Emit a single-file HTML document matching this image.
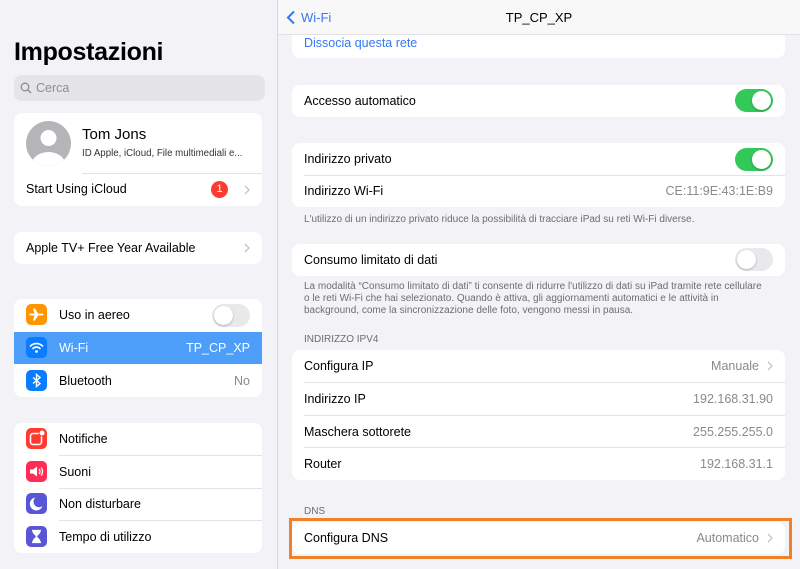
<!DOCTYPE html>
<html><head><meta charset="utf-8"><style>
*{margin:0;padding:0;box-sizing:border-box}
body{width:800px;height:569px;overflow:hidden;background:#f2f2f7;font-family:"Liberation Sans",sans-serif;color:#000;position:relative;font-size:12.5px}
.a{position:absolute}
.card{position:absolute;background:#fff;border-radius:8px;overflow:hidden}
.row{position:absolute;left:0;right:0;height:32px;line-height:32px;padding-left:12px}
.val{position:absolute;right:12px;top:0;color:#8a8a8e}
.chev{display:inline-block;width:6px;height:10px;margin-left:8px;vertical-align:-1px}
.sep{position:absolute;height:1px;background:#e3e3e6;right:0}
.foot{position:absolute;left:304px;font-size:10px;color:#6d6d72;line-height:12px;white-space:nowrap}
.tog{position:absolute;width:38px;height:23px;border-radius:12px}
.tog::after{content:"";position:absolute;top:2px;width:19px;height:19px;border-radius:50%;background:#fff;box-shadow:0 1px 2px rgba(0,0,0,.25)}
.on{background:#34c759}.on::after{right:2px}
.off{background:#e9e9eb}.off::after{left:2px}
.ic{position:absolute;left:12px;top:5px;width:21px;height:21px;border-radius:5px}
.ic svg{position:absolute;left:0;top:0}
.lbl{position:absolute;left:45px;top:0}
</style></head><body>
<svg width="0" height="0" style="position:absolute"><defs><symbol id="ch" viewBox="0 0 6 10"><path d="M1 1l4 4-4 4" fill="none" stroke="#c4c4c7" stroke-width="1.3"/></symbol></defs></svg>
<!-- sidebar -->
<div class="a" style="left:277px;top:0;width:1px;height:569px;background:#d8d8dc"></div>
<div class="a" style="left:14px;top:38px;font-size:25px;font-weight:bold;letter-spacing:-0.3px">Impostazioni</div>
<div class="a" style="left:14px;top:75px;width:251px;height:26px;border-radius:8px;background:#e4e4e9;color:#8e8e93;line-height:26px;padding-left:22px;font-size:12.5px">Cerca
<svg class="a" style="left:6px;top:7px" width="12" height="12" viewBox="0 0 12 12"><circle cx="5" cy="5" r="3.8" fill="none" stroke="#8e8e93" stroke-width="1.3"/><path d="M8 8L11 11" stroke="#8e8e93" stroke-width="1.4"/></svg></div>

<div class="card" style="left:14px;top:113px;width:248px;height:93px">
<svg class="a" style="left:12px;top:8px" width="45" height="45" viewBox="0 0 45 45"><defs><clipPath id="c"><circle cx="22.5" cy="22.5" r="22.5"/></clipPath></defs><circle cx="22.5" cy="22.5" r="22.5" fill="#b5b5b9"/><g clip-path="url(#c)" fill="#fff"><circle cx="22.5" cy="17" r="8"/><ellipse cx="22.5" cy="44" rx="17" ry="13"/></g></svg>
<div class="a" style="left:68px;top:13px;font-size:15px">Tom Jons</div>
<div class="a" style="left:68px;top:35px;font-size:9.7px;color:#333">ID Apple, iCloud, File multimediali e...</div>
<div class="sep" style="left:68px;top:60px"></div>
<div class="row" style="top:60px">Start Using iCloud</div>
<div class="a" style="left:197px;top:68px;width:17px;height:17px;border-radius:50%;background:#ff3b30;color:#fff;font-size:11px;text-align:center;line-height:17px">1</div>
<svg class="a" style="left:230px;top:72px" width="6" height="10"><use href="#ch"/></svg>
</div>

<div class="card" style="left:14px;top:232px;width:248px;height:32px">
<div class="row">Apple TV+ Free Year Available</div>
<svg class="a" style="left:230px;top:11px" width="6" height="10"><use href="#ch"/></svg>
</div>

<div class="card" style="left:14px;top:299px;width:248px;height:98px">
<div class="row" style="top:0"><div class="ic" style="background:#ff9500"><svg width="21" height="21" viewBox="0 0 21 21"><path d="M3.5 9.6h5L7 4.5h1.8l3.4 5.1h3.8c1 0 1.5.4 1.5.9s-.5.9-1.5.9h-3.8L8.8 16.5H7l1.5-5.1h-5z" fill="#fff"/></svg></div><span class="lbl">Uso in aereo</span></div>
<div class="tog off" style="left:198px;top:5px"></div>
<div class="row" style="top:33px;background:#4c9ef8;color:#fff"><div class="ic" style="background:#0a7cff"><svg width="21" height="21" viewBox="0 0 21 21"><g fill="none" stroke="#fff" stroke-width="1.6" stroke-linecap="round"><path d="M4.5 9a8.5 8.5 0 0 1 12 0"/><path d="M7 11.5a5 5 0 0 1 7 0"/></g><circle cx="10.5" cy="14.5" r="1.4" fill="#fff"/></svg></div><span class="lbl">Wi-Fi</span><span class="val" style="color:#fff">TP_CP_XP</span></div>
<div class="row" style="top:66px"><div class="ic" style="background:#0a7cff"><svg width="21" height="21" viewBox="0 0 21 21"><path d="M7 7.5l7 6-3.5 3v-12l3.5 3-7 6" fill="none" stroke="#fff" stroke-width="1.4"/></svg></div><span class="lbl">Bluetooth</span><span class="val">No</span></div>
</div>

<div class="card" style="left:14px;top:423px;width:248px;height:130px">
<div class="row" style="top:0"><div class="ic" style="background:#ff3b30"><svg width="21" height="21" viewBox="0 0 21 21"><rect x="4.5" y="5.5" width="11" height="11" rx="2.5" fill="none" stroke="#fff" stroke-width="1.5"/><circle cx="16" cy="5" r="3" fill="#fff" stroke="#ff3b30" stroke-width="1"/></svg></div><span class="lbl">Notifiche</span></div>
<div class="sep" style="left:45px;top:32px"></div>
<div class="row" style="top:33px"><div class="ic" style="background:#ff2d55"><svg width="21" height="21" viewBox="0 0 21 21"><path d="M4 8.5h3l4-3v10l-4-3H4z" fill="#fff"/><path d="M13 8a3.5 3.5 0 0 1 0 5M15 6.5a6 6 0 0 1 0 8" fill="none" stroke="#fff" stroke-width="1.2"/></svg></div><span class="lbl">Suoni</span></div>
<div class="sep" style="left:45px;top:65px"></div>
<div class="row" style="top:65px"><div class="ic" style="background:#5856d6"><svg width="21" height="21" viewBox="0 0 21 21"><path d="M9.5 4.5a6.5 6.5 0 1 0 7 8.5a5.5 5.5 0 0 1-7-8.5z" fill="#fff"/></svg></div><span class="lbl">Non disturbare</span></div>
<div class="sep" style="left:45px;top:97px"></div>
<div class="row" style="top:98px"><div class="ic" style="background:#5856d6"><svg width="21" height="21" viewBox="0 0 21 21"><path d="M6 4.5h9M6 16.5h9M7 4.5c0 4 3.5 4 3.5 6S7 12.5 7 16.5h7c0-4-3.5-4-3.5-6S14 8.5 14 4.5" fill="#fff" stroke="#fff" stroke-width="1.3"/></svg></div><span class="lbl">Tempo di utilizzo</span></div>
</div>

<!-- right -->
<div class="card" style="left:292px;top:20px;width:493px;height:38px;border-radius:8px">
<div class="a" style="left:12px;top:16px;color:#3478f6">Dissocia questa rete</div></div>
<div class="a" style="left:278px;top:0;width:522px;height:35px;background:#f8f8f9;border-bottom:1px solid #e2e2e5"></div>
<svg class="a" style="left:286px;top:10px" width="10" height="15" viewBox="0 0 10 15"><path d="M8 1.5L2 7.5l6 6" fill="none" stroke="#3478f6" stroke-width="2"/></svg>
<div class="a" style="left:301px;top:10px;color:#3478f6;font-size:13px">Wi-Fi</div>
<div class="a" style="left:0;width:1078px;text-align:center;top:10px;font-size:13px">TP_CP_XP</div>

<div class="card" style="left:292px;top:85px;width:493px;height:32px"><div class="row">Accesso automatico</div><div class="tog on" style="right:12px;top:4px"></div></div>

<div class="card" style="left:292px;top:143px;width:493px;height:64px">
<div class="row">Indirizzo privato</div><div class="tog on" style="right:12px;top:5px"></div>
<div class="sep" style="left:12px;top:32px"></div>
<div class="row" style="top:32px">Indirizzo Wi-Fi<span class="val">CE:11:9E:43:1E:B9</span></div>
</div>
<div class="foot" style="top:214px">L'utilizzo di un indirizzo privato riduce la possibilità di tracciare iPad su reti Wi-Fi diverse.</div>

<div class="card" style="left:292px;top:244px;width:493px;height:32px"><div class="row">Consumo limitato di dati</div><div class="tog off" style="right:12px;top:4px"></div></div>
<div class="foot" style="top:281px">La modalità “Consumo limitato di dati” ti consente di ridurre l'utilizzo di dati su iPad tramite rete cellulare<br>o le reti Wi-Fi che hai selezionato. Quando è attiva, gli aggiornamenti automatici e le attività in<br>background, come la sincronizzazione delle foto, vengono messi in pausa.</div>
<div class="foot" style="top:334px">INDIRIZZO IPV4</div>

<div class="card" style="left:292px;top:350px;width:493px;height:130px">
<div class="row" style="top:0">Configura IP<span class="val">Manuale<svg class="chev"><use href="#ch"/></svg></span></div>
<div class="sep" style="left:12px;top:32px"></div>
<div class="row" style="top:33px">Indirizzo IP<span class="val">192.168.31.90</span></div>
<div class="sep" style="left:12px;top:65px"></div>
<div class="row" style="top:66px">Maschera sottorete<span class="val">255.255.255.0</span></div>
<div class="sep" style="left:12px;top:97px"></div>
<div class="row" style="top:98px">Router<span class="val">192.168.31.1</span></div>
</div>
<div class="foot" style="top:506px">DNS</div>
<div class="card" style="left:292px;top:522px;width:493px;height:32px"><div class="row">Configura DNS<span class="val">Automatico<svg class="chev"><use href="#ch"/></svg></span></div></div>
<div class="a" style="left:289px;top:518px;width:503px;height:41px;border:3px solid #f0802a"></div>
</body></html>
